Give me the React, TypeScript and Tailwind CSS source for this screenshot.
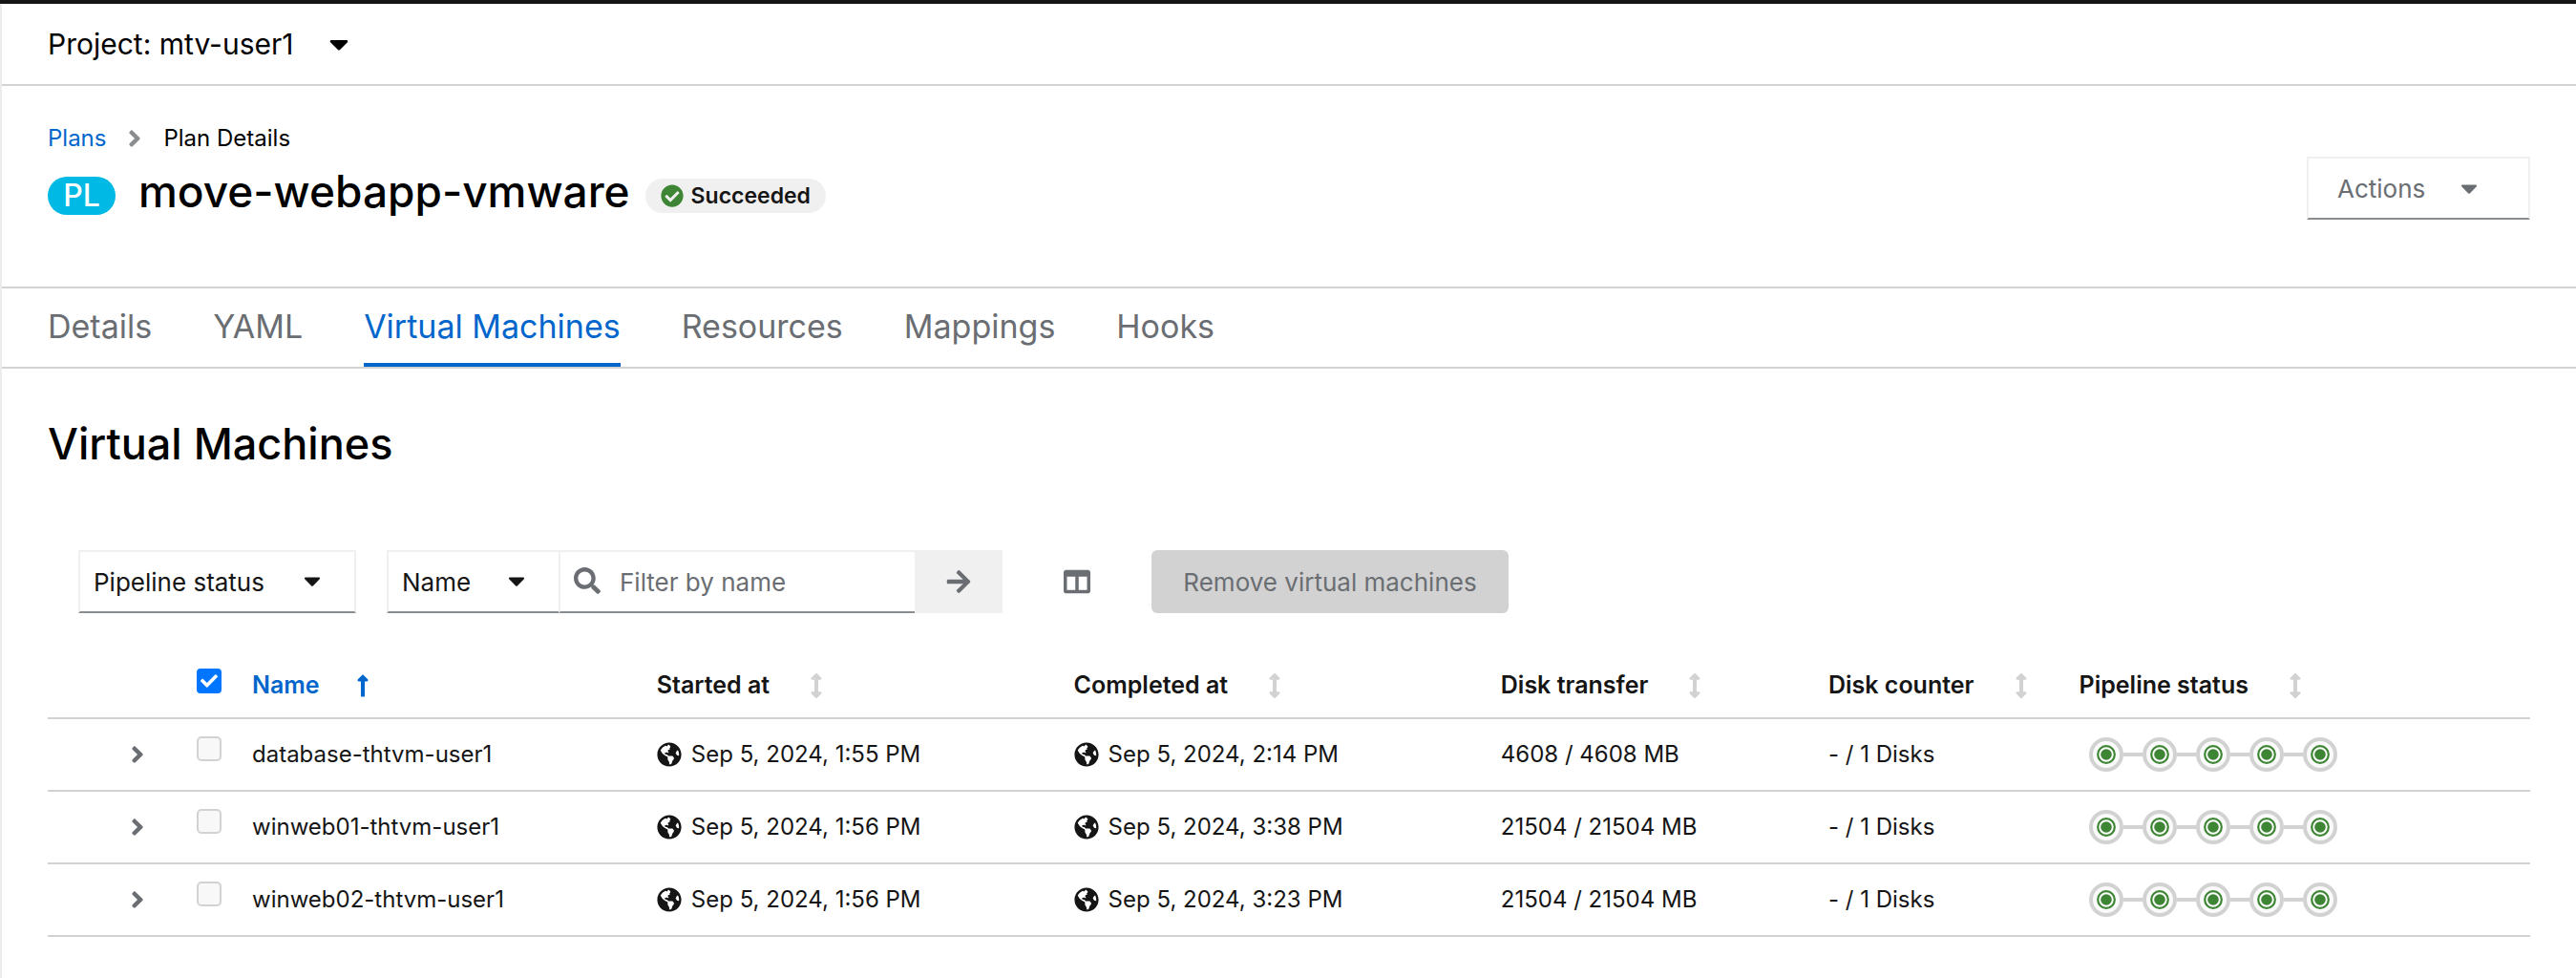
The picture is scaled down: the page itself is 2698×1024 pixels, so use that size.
import React from 'react';
import {
  FaAngleRight,
  FaArrowRight,
  FaArrowsAltV,
  FaCaretDown,
  FaCheck,
  FaCheckCircle,
  FaColumns,
  FaGlobeAmericas,
  FaLongArrowAltUp,
  FaSearch,
} from 'react-icons/fa';

const tabs = ['Details', 'YAML', 'Virtual Machines', 'Resources', 'Mappings', 'Hooks'];

const columns = ['Started at', 'Completed at', 'Disk transfer', 'Disk counter', 'Pipeline status'];

const machines = [
  { name: 'database-thtvm-user1', started: 'Sep 5, 2024, 1:55 PM', completed: 'Sep 5, 2024, 2:14 PM', transfer: '4608 / 4608 MB', disks: '- / 1 Disks' },
  { name: 'winweb01-thtvm-user1', started: 'Sep 5, 2024, 1:56 PM', completed: 'Sep 5, 2024, 3:38 PM', transfer: '21504 / 21504 MB', disks: '- / 1 Disks' },
  { name: 'winweb02-thtvm-user1', started: 'Sep 5, 2024, 1:56 PM', completed: 'Sep 5, 2024, 3:23 PM', transfer: '21504 / 21504 MB', disks: '- / 1 Disks' },
];

function Select({ label, className }: { label: string; className: string }) {
  return (
    <div className={`relative h-[66px] ${className}`}>
      <select
        aria-label={label}
        className="h-full w-full appearance-none border-2 border-[#f0f0f0] border-b-[#8a8d90] bg-white pl-3.5 text-[26px] text-[#151515]"
      >
        <option>{label}</option>
      </select>
      <FaCaretDown className="pointer-events-none absolute top-[18px] right-8 size-7 text-[#151515]" />
    </div>
  );
}

function Timestamp({ value }: { value: string }) {
  return (
    <span className="flex items-center gap-2.5">
      <FaGlobeAmericas className="size-[26px] shrink-0" />
      {value}
    </span>
  );
}

function Pipeline() {
  return (
    <div className="flex items-center pl-2.5" role="img" aria-label="All pipeline steps completed">
      {[0, 1, 2, 3, 4].map((step) => (
        <React.Fragment key={step}>
          {step > 0 && <span className="h-1 w-5 bg-[#d2d2d2]" />}
          <svg viewBox="0 0 36 36" className="size-9 shrink-0">
            <circle cx="18" cy="18" r="16" fill="#fafafa" stroke="#d2d2d2" strokeWidth="4" />
            <circle cx="18" cy="18" r="8.8" fill="#fff" stroke="#3e8635" strokeWidth="2.2" />
            <circle cx="18" cy="18" r="5.8" fill="#3e8635" />
          </svg>
        </React.Fragment>
      ))}
    </div>
  );
}

function MachineTable() {
  const cell = 'border-b-2 border-[#d2d2d2] pl-4';
  const th = `${cell} h-[72px] text-left text-[25px] font-semibold`;
  const td = `${cell} h-[76px] text-[24px]`;
  return (
    <table className="mt-[39px] w-full table-fixed border-separate border-spacing-0 whitespace-nowrap text-[#151515]">
      <colgroup>
        <col className="w-[140px]" />
        <col className="w-[58px]" />
        <col className="w-[16.3%]" />
        <col className="w-[16.8%]" />
        <col className="w-[17.2%]" />
        <col className="w-[13.2%]" />
        <col className="w-[10.1%]" />
        <col />
      </colgroup>
      <thead>
        <tr>
          <th className={th} aria-label="Expand" />
          <th className={`${th} pt-[19px] align-top`}>
            <label className="relative block size-[26px]">
              <input
                type="checkbox"
                defaultChecked
                aria-label="Select all"
                className="block size-[26px] appearance-none rounded-[4px] border-2 border-[#ccc] bg-white checked:border-[#0075ff] checked:bg-[#0075ff]"
              />
              <FaCheck className="pointer-events-none absolute inset-1 size-[18px] text-white" />
            </label>
          </th>
          <th className={`${th} pt-1`} aria-sort="ascending">
            <button className="flex items-center gap-8 text-[#0066cc]">
              Name
              <FaLongArrowAltUp className="size-[26px]" />
            </button>
          </th>
          {columns.map((column) => (
            <th key={column} className={`${th} pt-1`}>
              <button className="flex items-center gap-9">
                {column}
                <FaArrowsAltV className="size-[26px] text-[#d2d2d2]" />
              </button>
            </th>
          ))}
        </tr>
      </thead>
      <tbody>
        {machines.map((vm) => (
          <tr key={vm.name}>
            <td className={td}>
              <button aria-label={`Expand ${vm.name}`} className="ml-[64px] block">
                <FaAngleRight className="size-7 text-[#6a6e73]" />
              </button>
            </td>
            <td className={`${td} pt-[18px] align-top`}>
              <input
                type="checkbox"
                disabled
                aria-label={`Select ${vm.name}`}
                className="block size-[26px] appearance-none rounded-[5px] border-2 border-[#d2d2d2] bg-[#f8f8f8]"
              />
            </td>
            <td className={td}>{vm.name}</td>
            <td className={td}><Timestamp value={vm.started} /></td>
            <td className={td}><Timestamp value={vm.completed} /></td>
            <td className={td}>{vm.transfer}</td>
            <td className={td}>{vm.disks}</td>
            <td className={td}><Pipeline /></td>
          </tr>
        ))}
      </tbody>
    </table>
  );
}

export default function App() {
  return (
    <div className="min-h-screen border-t-4 border-[#151515] bg-white font-['Inter','Liberation_Sans',sans-serif] text-black">
      <div className="min-h-[1020px] border-l-2 border-[#ececec]">
        <div className="flex h-[86px] items-center border-b-2 border-[#d2d2d2] px-12">
          <button className="flex items-center gap-8 text-[30px]">
            Project: mtv-user1
            <FaCaretDown className="size-8" />
          </button>
        </div>

        <header className="flex items-start justify-between px-12 pt-[37px] pb-[67px]">
          <div>
            <nav aria-label="Breadcrumb" className="flex h-9 items-center gap-4 text-[24px]">
              <a href="#plans" className="text-[#0066cc]">Plans</a>
              <FaAngleRight className="size-7 text-[#8a8d90]" />
              <span>Plan Details</span>
            </nav>
            <div className="mt-3.5 flex h-14 items-center">
              <span className="flex h-10 w-[71px] items-center justify-center rounded-full bg-[#00b9e4] text-[32px] font-medium text-white">PL</span>
              <h1 className="ml-6 pb-2.5 text-[46px] leading-[56px] font-medium">move-webapp-vmware</h1>
              <span className="ml-4 flex h-9 items-center gap-2 rounded-full bg-[#f0f0f0] px-4 text-[23px] font-semibold text-[#151515]">
                <FaCheckCircle className="size-6 text-[#3e8635]" />
                Succeeded
              </span>
            </div>
          </div>
          <button className="mt-[37px] flex h-[66px] w-[234px] items-center gap-8 border-2 border-[#f0f0f0] border-b-[#8a8d90] pl-[30px] text-[26px] text-[#6a6e73]">
            Actions
            <FaCaretDown className="size-7" />
          </button>
        </header>

        <div role="tablist" className="flex h-[86px] gap-16 border-y-2 border-[#d2d2d2] px-12 text-[34px]">
          {tabs.map((tab) => (
            <button
              key={tab}
              role="tab"
              aria-selected={tab === 'Virtual Machines'}
              className="border-b-4 border-transparent text-[#6a6e73] aria-selected:border-[#0066cc] aria-selected:text-[#0066cc]"
            >
              {tab}
            </button>
          ))}
        </div>

        <main className="px-12 pt-[50px]">
          <h2 className="text-[45px] leading-[58px] font-medium">Virtual Machines</h2>

          <div className="mt-[82px] flex items-center gap-8 px-8 text-[26px]">
            <Select label="Pipeline status" className="w-[291px]" />
            <div className="flex h-[66px]">
              <Select label="Name" className="w-[182px]" />
              <div className="relative -ml-0.5 w-[373px]">
                <FaSearch className="pointer-events-none absolute top-[18px] left-4 size-7 text-[#6a6e73]" />
                <input
                  type="text"
                  aria-label="Filter by name"
                  placeholder="Filter by name"
                  className="h-full w-full border-2 border-r-0 border-[#f0f0f0] border-b-[#8a8d90] pl-[62px] placeholder:text-[#6a6e73]"
                />
              </div>
              <button aria-label="Apply filter" className="flex w-[92px] items-center justify-center bg-[#f0f0f0]">
                <FaArrowRight className="size-7 text-[#6a6e73]" />
              </button>
            </div>
            <button aria-label="Manage columns" className="px-8">
              <FaColumns className="size-7 text-[#6a6e73]" />
            </button>
            <button disabled className="h-[66px] w-[374px] rounded-md bg-[#d2d2d2] text-[#6a6e73]">
              Remove virtual machines
            </button>
          </div>

          <MachineTable />
        </main>
      </div>
    </div>
  );
}
